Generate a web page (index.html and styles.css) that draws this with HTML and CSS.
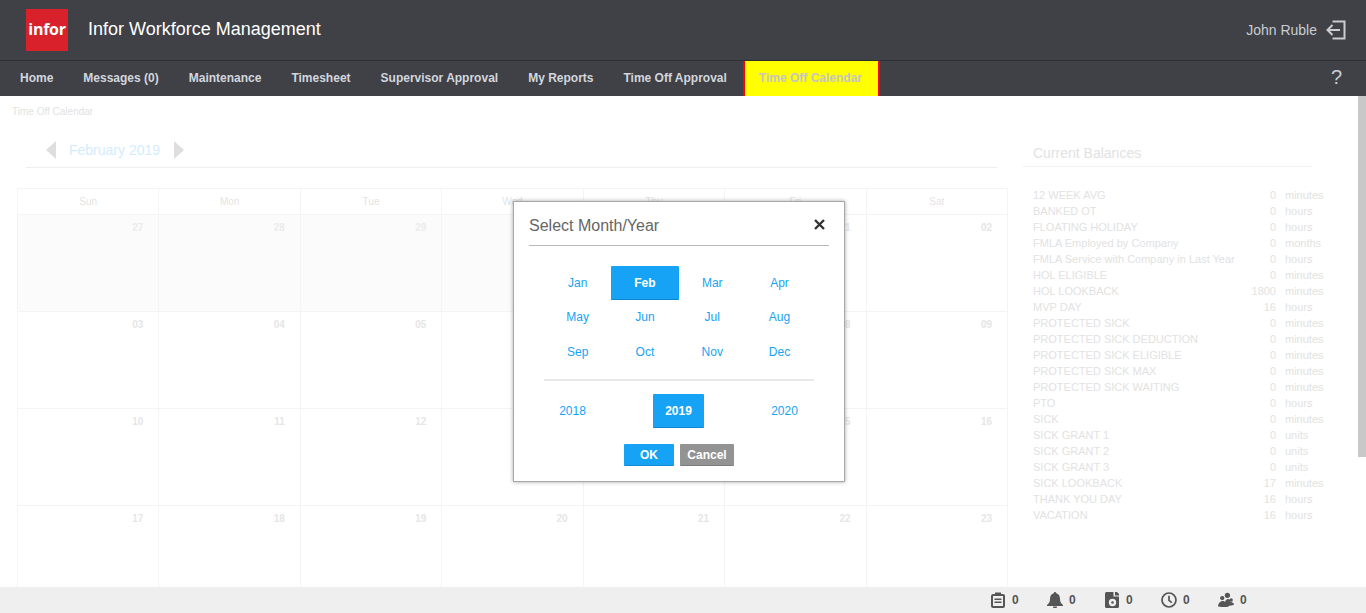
FILE: index.html
```html
<!DOCTYPE html>
<html lang="en">
<head>
  <meta charset="UTF-8" />
  <title>Time Off Calendar</title>
  <link rel="stylesheet" href="styles.css">
</head>
<body>
  <div class="app">
    <!-- Header -->
    <header class="top-bar">
      <div class="logo">infor</div>
      <div class="app-title">Infor Workforce Management</div>
      <div class="user-box">
        <span>John Ruble</span>
        <svg class="logout-icon" width="20" height="20" viewBox="0 0 20 20" fill="none" stroke="#c9ccd3" stroke-width="2">
          <path d="M6.500 1.500h12v17h-12" />
          <path d="M14 10H1.500M6.500 5l-5 5 5 5" />
        </svg>
      </div>
    </header>

    <!-- Nav -->
    <nav class="nav-bar">
      <a class="nav-item">Home</a>
      <a class="nav-item">Messages (0)</a>
      <a class="nav-item">Maintenance</a>
      <a class="nav-item">Timesheet</a>
      <a class="nav-item">Supervisor Approval</a>
      <a class="nav-item">My Reports</a>
      <a class="nav-item">Time Off Approval</a>
      <a class="nav-item active">Time Off Calendar</a>
      <span class="help">?</span>
    </nav>

    <!-- Page content, dimmed behind the dialog -->
    <main class="content">
      <div class="scroll-thumb"></div>
      <div class="crumb">Time Off Calendar</div>
      <div class="columns">
        <section class="calendar">
          <div class="month-head">
            <span class="arrow left"></span>
            <span class="month-name">February 2019</span>
            <span class="arrow right"></span>
          </div>
          <table class="cal-table">
            <thead>
              <tr><th>Sun</th><th>Mon</th><th>Tue</th><th>Wed</th><th>Thu</th><th>Fri</th><th>Sat</th></tr>
            </thead>
            <tbody>
              <tr>
                <td class="other">27</td><td class="other">28</td><td class="other">29</td><td class="other">30</td><td class="other">31</td><td>01</td><td>02</td>
              </tr>
              <tr><td>03</td><td>04</td><td>05</td><td>06</td><td>07</td><td>08</td><td>09</td></tr>
              <tr><td>10</td><td>11</td><td>12</td><td>13</td><td>14</td><td>15</td><td>16</td></tr>
              <tr><td>17</td><td>18</td><td>19</td><td>20</td><td>21</td><td>22</td><td>23</td></tr>
            </tbody>
          </table>
        </section>

        <aside class="balances">
          <h3>Current Balances</h3>
          <div class="bal-list">
            <div class="bal-row"><span class="bal-name">12 WEEK AVG</span><span class="bal-val">0</span><span class="bal-unit">minutes</span></div>
            <div class="bal-row"><span class="bal-name">BANKED OT</span><span class="bal-val">0</span><span class="bal-unit">hours</span></div>
            <div class="bal-row"><span class="bal-name">FLOATING HOLIDAY</span><span class="bal-val">0</span><span class="bal-unit">hours</span></div>
            <div class="bal-row"><span class="bal-name">FMLA Employed by Company</span><span class="bal-val">0</span><span class="bal-unit">months</span></div>
            <div class="bal-row"><span class="bal-name">FMLA Service with Company in Last Year</span><span class="bal-val">0</span><span class="bal-unit">hours</span></div>
            <div class="bal-row"><span class="bal-name">HOL ELIGIBLE</span><span class="bal-val">0</span><span class="bal-unit">minutes</span></div>
            <div class="bal-row"><span class="bal-name">HOL LOOKBACK</span><span class="bal-val">1800</span><span class="bal-unit">minutes</span></div>
            <div class="bal-row"><span class="bal-name">MVP DAY</span><span class="bal-val">16</span><span class="bal-unit">hours</span></div>
            <div class="bal-row"><span class="bal-name">PROTECTED SICK</span><span class="bal-val">0</span><span class="bal-unit">minutes</span></div>
            <div class="bal-row"><span class="bal-name">PROTECTED SICK DEDUCTION</span><span class="bal-val">0</span><span class="bal-unit">minutes</span></div>
            <div class="bal-row"><span class="bal-name">PROTECTED SICK ELIGIBLE</span><span class="bal-val">0</span><span class="bal-unit">minutes</span></div>
            <div class="bal-row"><span class="bal-name">PROTECTED SICK MAX</span><span class="bal-val">0</span><span class="bal-unit">minutes</span></div>
            <div class="bal-row"><span class="bal-name">PROTECTED SICK WAITING</span><span class="bal-val">0</span><span class="bal-unit">minutes</span></div>
            <div class="bal-row"><span class="bal-name">PTO</span><span class="bal-val">0</span><span class="bal-unit">hours</span></div>
            <div class="bal-row"><span class="bal-name">SICK</span><span class="bal-val">0</span><span class="bal-unit">minutes</span></div>
            <div class="bal-row"><span class="bal-name">SICK GRANT 1</span><span class="bal-val">0</span><span class="bal-unit">units</span></div>
            <div class="bal-row"><span class="bal-name">SICK GRANT 2</span><span class="bal-val">0</span><span class="bal-unit">units</span></div>
            <div class="bal-row"><span class="bal-name">SICK GRANT 3</span><span class="bal-val">0</span><span class="bal-unit">units</span></div>
            <div class="bal-row"><span class="bal-name">SICK LOOKBACK</span><span class="bal-val">17</span><span class="bal-unit">minutes</span></div>
            <div class="bal-row"><span class="bal-name">THANK YOU DAY</span><span class="bal-val">16</span><span class="bal-unit">hours</span></div>
            <div class="bal-row"><span class="bal-name">VACATION</span><span class="bal-val">16</span><span class="bal-unit">hours</span></div>
          </div>
        </aside>
      </div>
    </main>

    <!-- Footer -->
    <footer class="status-bar">
      <div class="status-item">
        <span class="status-icon">
          <svg width="14" height="16" viewBox="0 0 14 16" fill="#555">
            <path fill-rule="evenodd" d="M2 2h2V.5h6V2h2a2 2 0 0 1 2 2v10a2 2 0 0 1-2 2H2a2 2 0 0 1-2-2V4a2 2 0 0 1 2-2zm0 2v10h10V4z" />
            <path d="M3.500 6.500h7V8h-7zM3.500 9.500h7V11h-7z" />
          </svg>
        </span>
        <span>0</span>
      </div>
      <div class="status-item">
        <span class="status-icon">
          <svg width="16" height="16" viewBox="0 0 16 16" fill="#555">
            <path d="M8 0a1.200 1.200 0 0 1 1.200 1.300C11.800 2 13 4.300 13 7c0 3 1 4.500 3 6v1H0v-1c2-1.500 3-3 3-6 0-2.700 1.200-5 3.800-5.700A1.200 1.200 0 0 1 8 0zM6 14.500h4a2 2 0 0 1-4 0z" />
          </svg>
        </span>
        <span>0</span>
      </div>
      <div class="status-item">
        <span class="status-icon">
          <svg width="14" height="16" viewBox="0 0 14 16" fill="#555">
            <path fill-rule="evenodd" d="M1.500 0h7v4.500H14v10a1.500 1.500 0 0 1-1.500 1.500h-11A1.500 1.500 0 0 1 0 14.500v-13A1.500 1.500 0 0 1 1.500 0zm6 6.800a3.700 3.700 0 1 0 0 7.400 3.700 3.700 0 0 0 0-7.400zm0 2.400a1.300 1.300 0 1 1 0 2.600 1.300 1.300 0 0 1 0-2.600z" />
            <path d="M10 0h2l2 2v1.500h-4z" />
          </svg>
        </span>
        <span>0</span>
      </div>
      <div class="status-item">
        <span class="status-icon">
          <svg width="16" height="16" viewBox="0 0 16 16" fill="none" stroke="#555" stroke-width="1.700">
            <circle cx="8" cy="8" r="7" />
            <path d="M8 3.800v4.500l2.800 2.300" />
          </svg>
        </span>
        <span>0</span>
      </div>
      <div class="status-item">
        <span class="status-icon">
          <svg width="16" height="16" viewBox="0 0 17 16" fill="#555">
            <circle cx="10" cy="3" r="2.800" />
            <circle cx="4.500" cy="6" r="2.300" />
            <circle cx="14" cy="8" r="1.800" />
            <path d="M0 15c0-3.500 2.500-6 5-6 1 0 2 .4 2.500 1 .6-2 2-3 3-3 2 0 3 2 3 3 1.500 0 3.500 1 3.500 2.500 0 1-2 1.500-5 1.500-.5 1-2 1.500-5 1.500-4 0-7-.3-7-1z" />
          </svg>
        </span>
        <span>0</span>
      </div>
    </footer>
  </div>

  <!-- Select Month/Year dialog -->
  <div class="modal">
    <div class="modal-head">
      <span class="modal-title">Select Month/Year</span>
      <svg class="close-x" width="11" height="11" viewBox="0 0 11 11" stroke="#333" stroke-width="2.400">
        <path d="M1 1l9 9M10 1l-9 9" />
      </svg>
    </div>
    <div class="month-grid">
      <a class="pick">Jan</a>
      <a class="pick selected">Feb</a>
      <a class="pick">Mar</a>
      <a class="pick">Apr</a>
      <a class="pick">May</a>
      <a class="pick">Jun</a>
      <a class="pick">Jul</a>
      <a class="pick">Aug</a>
      <a class="pick">Sep</a>
      <a class="pick">Oct</a>
      <a class="pick">Nov</a>
      <a class="pick">Dec</a>
    </div>
    <div class="year-row">
      <a class="pick">2018</a>
      <a class="pick year-on selected">2019</a>
      <a class="pick">2020</a>
    </div>
    <div class="modal-buttons">
      <button class="btn ok">OK</button>
      <button class="btn cancel">Cancel</button>
    </div>
  </div>
</body>
</html>
```

FILE: styles.css
```css
* {
  box-sizing: border-box;
}

body {
  margin: 0;
  font-family: "Liberation Sans", Arial, sans-serif;
  background: white;
  overflow: hidden;
}

.app {
  height: 100vh;
  display: flex;
  flex-direction: column;
}

/* Header */
.top-bar {
  height: 61px;
  flex: none;
  display: flex;
  align-items: center;
  background: #404146;
  border-bottom: 1px solid #2e2f33;
  padding: 0 20px 1px 26px;
}

.logo {
  width: 42px;
  height: 42px;
  background: #d8212a;
  color: white;
  font-family: "Open Sans", sans-serif;
  font-weight: 700;
  font-size: 16px;
  letter-spacing: -0.3px;
  line-height: 41px;
  text-align: center;
}

.app-title {
  margin-left: 20px;
  color: white;
  font-size: 18px;
}

.user-box {
  margin-left: auto;
  display: flex;
  align-items: center;
  gap: 9px;
  color: #c9ccd3;
  font-size: 14px;
}

/* Nav */
.nav-bar {
  height: 35px;
  flex: none;
  display: flex;
  align-items: stretch;
  background: #404146;
  padding-left: 5px;
}

.nav-item {
  display: flex;
  align-items: center;
  padding: 0 15px 2px;
  color: #d2d6de;
  font-size: 12px;
  font-weight: bold;
}

.nav-item.active {
  background: yellow;
  color: #c4c4c4;
  border-left: 2px solid red;
  border-right: 2px solid red;
  padding: 0 16px 2px 14px;
  margin-left: 1px;
}

.help {
  margin-left: auto;
  margin-right: 24px;
  padding-bottom: 2px;
  align-self: center;
  color: #c9ccd3;
  font-size: 20px;
}

/* Content */
.content {
  flex: 1;
  min-height: 0;
  overflow: hidden;
  position: relative;
}

.scroll-thumb {
  position: absolute;
  top: 0;
  right: 0;
  width: 8px;
  height: 361px;
  background: #c8c8c8;
}

.crumb {
  padding: 10px 0 0 12px;
  font-size: 10px;
  line-height: 12px;
  color: #e2e2e2;
}

.columns {
  display: flex;
  align-items: flex-start;
}

.calendar {
  width: 991px;
  margin-left: 17px;
  flex: none;
}

.month-head {
  display: flex;
  align-items: center;
  height: 38px;
  margin: 12px 11px 0 9px;
  padding: 2px 0 0 20px;
  border-bottom: 1px solid #eeeeee;
}

.month-name {
  margin: 0 14px 0 13px;
  font-size: 14px;
  color: #d3ecfd;
}

.arrow {
  width: 0;
  height: 0;
  border-top: 9px solid transparent;
  border-bottom: 9px solid transparent;
}

.arrow.left {
  border-right: 10px solid #dedede;
}

.arrow.right {
  border-left: 10px solid #dedede;
}

.cal-table {
  width: 100%;
  margin-top: 20px;
  border-collapse: collapse;
  table-layout: fixed;
}

.cal-table th,
.cal-table td {
  border: 1px solid #f4f4f4;
}

.cal-table th {
  height: 26px;
  font-size: 10px;
  font-weight: normal;
  color: #e4e4e4;
}

.cal-table td {
  height: 97px;
  padding: 7px 15px 0 0;
  vertical-align: top;
  text-align: right;
  font-size: 10px;
  font-weight: bold;
  color: #e6e6e6;
}

.cal-table td.other {
  background: #fbfbfb;
  color: #ebebeb;
}

.balances {
  width: 289px;
  margin: 27px 0 0 15px;
  flex: none;
}

.balances h3 {
  margin: 0;
  padding: 0 0 5px 10px;
  height: 22px;
  border-bottom: 1px solid #f2f2f2;
  font-size: 14px;
  font-weight: normal;
  color: #e2e2e2;
}

.bal-list {
  width: 320px;
  padding: 20px 0 0 10px;
}

.bal-row {
  display: flex;
  height: 16px;
  line-height: 16px;
  font-size: 11px;
  color: #e2e2e2;
}

.bal-name {
  width: 216px;
  white-space: nowrap;
}

.bal-val {
  width: 27px;
  text-align: right;
}

.bal-unit {
  margin-left: 9px;
}

/* Footer */
.status-bar {
  height: 26px;
  flex: none;
  display: flex;
  align-items: center;
  background: #efefef;
  padding-left: 990px;
}

.status-item {
  width: 57px;
  display: flex;
  align-items: center;
  gap: 6px;
  font-size: 12px;
  font-weight: bold;
  color: #555;
}

.status-icon {
  width: 16px;
  height: 16px;
  display: flex;
  justify-content: center;
}

/* Dialog */
.modal {
  position: absolute;
  left: 513px;
  top: 201px;
  width: 332px;
  height: 281px;
  background: white;
  border: 1px solid #a8a8a8;
  box-shadow: 0 0 4px rgba(0, 0, 0, 0.35);
  padding: 0 15px;
}

.modal-head {
  display: flex;
  align-items: center;
  justify-content: space-between;
  height: 44px;
  padding: 5px 4px 0 0;
  border-bottom: 1px solid #bbbbbb;
}

.modal-title {
  font-size: 16px;
  color: #666;
}

.close-x {
  margin-bottom: 4px;
}

.month-grid {
  display: grid;
  grid-template-columns: repeat(4, 67.300px);
  grid-template-rows: 34px 34.500px 34.500px;
  margin: 20px 0 0 15px;
  width: 270px;
  height: 115px;
  border-bottom: 2px solid #e8e8e8;
}

.pick {
  display: flex;
  align-items: center;
  justify-content: center;
  color: #16a3f5;
  font-size: 12px;
}

.pick.selected {
  background: #16a3f5;
  color: white;
  font-weight: bold;
  border-radius: 1px;
  border-bottom: 1px solid #0d88d0;
}

.year-row {
  display: grid;
  grid-template-columns: repeat(3, 106px);
  justify-content: center;
  height: 34px;
  margin: 13px 1px 0 0;
}

.year-on {
  width: 51px;
  justify-self: center;
}

.modal-buttons {
  display: flex;
  justify-content: center;
  gap: 6px;
  margin-top: 16px;
}

.btn {
  height: 22px;
  padding: 0;
  border: none;
  border-bottom: 1px solid rgba(0, 0, 0, 0.15);
  border-radius: 1px;
  color: white;
  font-family: inherit;
  font-size: 12px;
  font-weight: bold;
}

.btn.ok {
  width: 50px;
  background: #16a3f5;
}

.btn.cancel {
  width: 54px;
  background: #939393;
}
```
